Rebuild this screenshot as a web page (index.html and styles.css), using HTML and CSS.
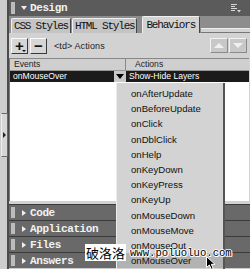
FILE: index.html
```html
<!DOCTYPE html>
<html>
<head>
<meta charset="utf-8">
<link rel="stylesheet" href="styles.css">
</head>
<body>
<div class="app">
  <div class="gutter"><div class="handle"><span class="tri-r"></span></div></div>
  <div class="panels">
    <section class="design">
      <div class="phead">
        <span class="grip"></span><span class="tri-d"></span><span class="ptitle">Design</span>
        <svg class="opts" width="10" height="9" viewBox="0 0 10 9"><path d="M0 0.5H6M0 2.5H4M0 4.5H6M0 6.5H4" stroke="#d8d8d8" stroke-width="1"/><path d="M6 6H10L8 8.5Z" fill="#d8d8d8"/></svg>
      </div>
      <div class="tabs">
        <div class="tab">CSS Styles</div>
        <div class="tab">HTML Styles</div>
        <div class="tab active">Behaviors</div>
        <div class="tabfill"></div>
      </div>
      <div class="pbody">
        <div class="toolbar">
          <div class="btn plus">+<span class="mini"></span></div>
          <div class="btn minus">−</div>
          <span class="ctx">&lt;td&gt; Actions</span>
          <span class="spacer"></span>
          <div class="btn arr"><span class="up"></span></div>
          <div class="btn arr"><span class="down"></span></div>
        </div>
        <div class="table">
          <div class="trow thead"><div class="c1">Events</div><div class="c2">Actions</div></div>
          <div class="trow sel"><div class="c1">onMouseOver</div><div class="ddbtn"><span class="down blk"></span></div><div class="c2">Show-Hide Layers</div></div>
          <div class="tbody"></div>
        </div>
      </div>
    </section>
    <div class="bar"><span class="grip"></span><span class="tri-rw"></span><span class="ptitle">Code</span></div>
    <div class="bar"><span class="grip"></span><span class="tri-rw"></span><span class="ptitle">Application</span></div>
    <div class="bar"><span class="grip"></span><span class="tri-rw"></span><span class="ptitle">Files</span></div>
    <div class="bar"><span class="grip"></span><span class="tri-rw"></span><span class="ptitle">Answers</span></div>
  </div>
</div>
<ul class="menu">
  <li>onAfterUpdate</li>
  <li>onBeforeUpdate</li>
  <li>onClick</li>
  <li>onDblClick</li>
  <li>onHelp</li>
  <li>onKeyDown</li>
  <li>onKeyPress</li>
  <li>onKeyUp</li>
  <li>onMouseDown</li>
  <li>onMouseMove</li>
  <li>onMouseOut</li>
  <li class="hi">onMouseOver</li>
</ul>
<div class="wm-cn">破洛洛</div>
<div class="wm-url">www.poluoluo.com</div>
<svg class="cursor" width="11" height="14" viewBox="0 0 11 14"><path d="M0.5 0.5V11.5L3.3 9L5.3 13.3L7.2 12.4L5.3 8.3H9Z" fill="#000" stroke="#fff" stroke-width="1"/></svg>
</body>
</html>
```

FILE: styles.css
```css
* { box-sizing: border-box; margin: 0; padding: 0; }
html, body { width: 250px; height: 269px; overflow: hidden; }
body {
  background: #cbcbcb;
  font-family: "Liberation Sans", Arial, sans-serif;
  position: relative;
}
.app { display: flex; height: 269px; }
.gutter {
  width: 9px;
  background: #cdcdcd;
  border-right: 2px solid #4b4b4b;
  padding-top: 113px;
  flex-shrink: 0;
}
.handle {
  width: 7px;
  height: 44px;
  margin-left: 1px;
  border: 1px solid #6a6a6a;
  border-left: 1px solid #eee;
  background: #d6d6d6;
  display: flex;
  align-items: center;
  justify-content: center;
}
.tri-r { width: 0; height: 0; border-left: 3px solid #222; border-top: 3px solid transparent; border-bottom: 3px solid transparent; }
.panels { flex: 1; display: flex; flex-direction: column; min-width: 0; }
.design { height: 204px; display: flex; flex-direction: column; background: #d2d2d2; }
.phead {
  height: 16px;
  background: #5b5b5b;
  display: flex;
  align-items: center;
  padding-left: 2px;
  flex-shrink: 0;
}
.grip {
  width: 4px; height: 12px;
  background-image: radial-gradient(circle, #bcbcbc 0.8px, transparent 1px);
  background-size: 2px 2px;
  margin-right: 6px;
}
.tri-d { width: 0; height: 0; border-top: 4px solid #eee; border-left: 3px solid transparent; border-right: 3px solid transparent; margin-right: 3px; }
.tri-rw { width: 0; height: 0; border-left: 4px solid #eee; border-top: 3.5px solid transparent; border-bottom: 3.5px solid transparent; margin: 0 4px 0 1px; }
.ptitle {
  font-family: "Liberation Mono", "Courier New", monospace;
  font-weight: bold;
  font-size: 11px;
  letter-spacing: -0.4px;
  color: #f2f2f2;
}
.opts { margin-left: auto; margin-right: 9px; }
.tabs {
  height: 17px;
  display: flex;
  align-items: flex-end;
  background: #8d8d8d;
  padding-left: 2px;
  flex-shrink: 0;
}
.tab {
  height: 15px;
  padding: 0 2px;
  font-family: "Liberation Mono", "Courier New", monospace;
  font-size: 11px;
  letter-spacing: -1.2px;
  line-height: 14px;
  color: #111;
  background: #c4c4c4;
  border: 1px solid #f0f0f0;
  border-right-color: #444;
  border-bottom: none;
  border-radius: 2px 2px 0 0;
  margin-right: 1px;
}
.tab.active { height: 17px; background: #d2d2d2; line-height: 16px; margin-left: 4px; padding: 0 4px 0 3px; }
.tabfill {
  flex: 1;
  height: 5px;
  border-top: 1px solid #eee;
  border-bottom: 1px solid #777;
  background: #d2d2d2;
}
.pbody { flex: 1; display: flex; flex-direction: column; padding: 0 1px 3px 0; }
.toolbar { height: 25px; display: flex; align-items: center; padding: 0 1px 0 2px; }
.btn {
  width: 17px; height: 16px;
  background: #d6d6d6;
  border: 1px solid;
  border-color: #fafafa #3a3a3a #3a3a3a #fafafa;
  display: flex; align-items: center; justify-content: center;
  font-family: "Liberation Sans", Arial, sans-serif;
  font-weight: bold;
  font-size: 15px;
  color: #111;
  position: relative;
  margin-right: 2px;
  line-height: 1;
}
.btn.minus { font-size: 15px; }
.mini { position: absolute; right: 1px; bottom: 1px; width: 0; height: 0; border-top: 2px solid #111; border-left: 2px solid transparent; border-right: 2px solid transparent; }
.ctx { font-size: 9px; color: #222; margin-left: 5px; letter-spacing: 0.1px; }
.spacer { flex: 1; }
.btn.arr { width: 18px; height: 15px; background: #c8c8c8; border-color: #f2f2f2 #8a8a8a #8a8a8a #f2f2f2; margin-right: 1px; }
.up { width: 0; height: 0; border-bottom: 5px solid #f0f0f0; border-left: 5px solid transparent; border-right: 5px solid transparent; }
.down { width: 0; height: 0; border-top: 5px solid #f0f0f0; border-left: 5px solid transparent; border-right: 5px solid transparent; }
.down.blk { border-top-color: #000; border-top-width: 5px; border-left-width: 4px; border-right-width: 4px; }
.table {
  flex: 1;
  display: flex;
  flex-direction: column;
  border-top: 1px solid #888;
  border-left: 1px solid #777;
  background: #fff;
}
.trow { display: flex; height: 11px; font-size: 8.6px; line-height: 11px; }
.thead { background: #cfcfcf; border-bottom: 1px solid #999; height: 12px; }
.thead .c1 { width: 116px; padding-left: 4px; border-right: 1px solid #888; color: #222; }
.thead .c2 { flex: 1; padding-left: 9px; color: #222; }
.sel { background: #1b1b1b; color: #fff; height: 11px; }
.sel .c1 { width: 104px; padding-left: 3px; }
.ddbtn { width: 12px; background: #c9c9c9; display: flex; align-items: center; justify-content: center; }
.sel .c2 { flex: 1; padding-left: 3px; }
.tbody { flex: 1; background: #fff; }
.bar {
  height: 16px;
  background: #696969;
  border-top: 1px solid #3a3a3a;
  display: flex;
  align-items: center;
  padding-left: 2px;
  flex-shrink: 0;
}
.bar .grip { height: 11px; }
.menu {
  position: absolute;
  left: 116px;
  top: 83px;
  width: 109px;
  height: 190px;
  list-style: none;
  background: #d3d3d3;
  border-left: 1px solid #ececec;
  border-right: 2px solid #555;
  padding-top: 3px;
}
.menu li {
  height: 15.2px;
  line-height: 15px;
  padding-left: 14px;
  font-size: 9.6px;
  color: #111;
}
.menu li.hi { background: #b2b2b2; }
.wm-cn {
  position: absolute;
  left: 85px; top: 244px;
  font-family: "Noto Sans CJK SC", sans-serif;
  font-size: 13px;
  line-height: 17px;
  color: #000;
  background: #fff;
  padding: 0 1px;
}
.wm-url {
  position: absolute;
  left: 130px; top: 247px;
  font-family: "Liberation Mono", "Courier New", monospace;
  font-size: 10.6px;
  line-height: 12px;
  color: #000;
  text-shadow: 1px 0 0 #fff, -1px 0 0 #fff, 0 1px 0 #fff, 0 -1px 0 #fff, 1px 1px 0 #fff;
}
.cursor { position: absolute; left: 206px; top: 256px; }
```
